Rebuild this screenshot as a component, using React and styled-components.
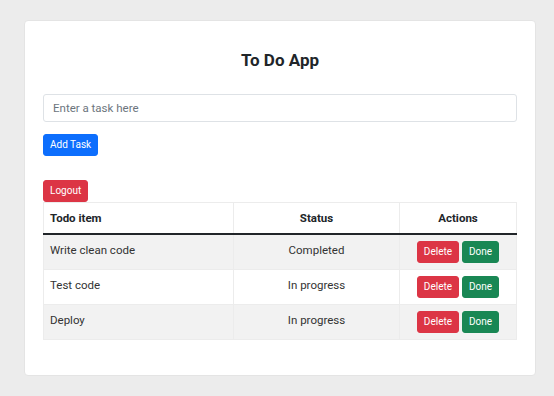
import React from "react";
import styled, { createGlobalStyle } from "styled-components";

const Global = createGlobalStyle`
  html, body { margin: 0; padding: 0; background: #ececec; }
  body { font-family: Roboto, "Noto Sans", "Liberation Sans", sans-serif; color: #212529; font-size: 11.5px; }
  * { box-sizing: border-box; }
`;

const Page = styled.div`
  padding: 20px 18px 21px 24px;
`;

const Card = styled.div`
  background: #fff;
  border: 1px solid #e4e4e4;
  border-radius: 4px;
  padding: 18px 18px 35px 18px;
  display: flex;
  flex-direction: column;
  align-items: flex-start;
`;

const Title = styled.h3`
  align-self: stretch;
  text-align: center;
  margin: 11px 0 24px;
  font-size: 17px;
  line-height: 20px;
  font-weight: 700;
  color: #212529;
`;

const Input = styled.input`
  align-self: stretch;
  height: 28px;
  padding: 0 9px;
  font: inherit;
  font-size: 11.5px;
  color: #212529;
  border: 1px solid #dee2e6;
  border-radius: 3px;
  outline: none;
  &::placeholder { color: #6c757d; }
`;

const Button = styled.button`
  font-family: inherit;
  font-size: 10px;
  line-height: 14px;
  padding: 3px 6px;
  border: 1px solid ${(p) => p.$bg};
  background: ${(p) => p.$bg};
  color: #fff;
  border-radius: 3px;
  cursor: pointer;
  margin-top: ${(p) => p.$mt || 0}px;
`;

const Table = styled.table`
  align-self: stretch;
  margin-top: 0;
  border-collapse: collapse;
  width: 100%;
  font-size: 11.5px;
  line-height: 18px;
`;

const Th = styled.th`
  padding: 6px 6px;
  border: 1px solid #ececec;
  border-bottom: 2px solid #212529;
  text-align: ${(p) => p.$align || "center"};
  font-weight: 700;
  width: ${(p) => p.$w};
`;

const Row = styled.tr`
  background: ${(p) => (p.$striped ? "#f2f2f2" : "#fff")};
`;

const Td = styled.td`
  padding: 6px 6px;
  border: 1px solid #ececec;
  vertical-align: top;
  text-align: ${(p) => p.$align || "center"};
  color: #333;
`;

const Actions = styled.div`
  display: flex;
  justify-content: center;
  gap: 3px;
`;

const todos = [
  { text: "Write clean code", status: "Completed" },
  { text: "Test code", status: "In progress" },
  { text: "Deploy", status: "In progress" },
];

export default function App() {
  return (
    <>
      <Global />
      <Page>
        <Card>
          <Title>To Do App</Title>
          <Input placeholder="Enter a task here" />
          <Button $bg="#0d6efd" $mt={12}>Add Task</Button>
          <Button $bg="#dc3545" $mt={24}>Logout</Button>
          <Table>
            <thead>
              <tr>
                <Th $align="left" $w="190px">Todo item</Th>
                <Th $w="166px">Status</Th>
                <Th>Actions</Th>
              </tr>
            </thead>
            <tbody>
              {todos.map((t, i) => (
                <Row key={t.text} $striped={i % 2 === 0}>
                  <Td $align="left">{t.text}</Td>
                  <Td>{t.status}</Td>
                  <Td>
                    <Actions>
                      <Button $bg="#dc3545">Delete</Button>
                      <Button $bg="#198754">Done</Button>
                    </Actions>
                  </Td>
                </Row>
              ))}
            </tbody>
          </Table>
        </Card>
      </Page>
    </>
  );
}
